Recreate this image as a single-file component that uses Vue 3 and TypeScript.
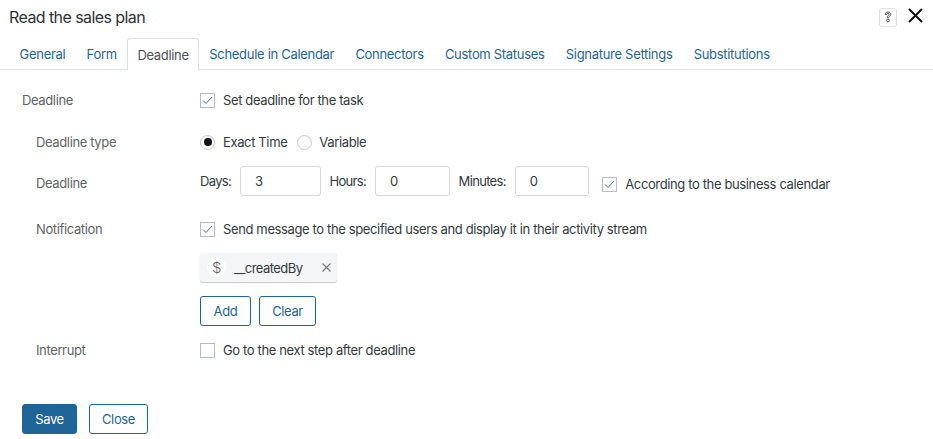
<template>
  <div class="dialog">
    <header class="head">
      <h1 class="title">Read the sales plan</h1>
      <div class="head_tools">
        <span class="help">
          <svg width="8" height="12" viewBox="0 0 8 12" fill="none" stroke="#555" stroke-width="1">
            <path d="M1.2 3.4C1.2 2 2.4 1 4 1s2.8 1 2.8 2.4c0 1-.7 1.6-1.4 2-.4.3-.6.5-.6 1H3.2c0-1 .5-1.5 1.1-1.9.5-.3.9-.6.9-1.1 0-.6-.5-1-1.2-1s-1.2.4-1.2 1z" />
            <circle cx="4" cy="9.4" r="1.4" />
          </svg>
        </span>
        <svg class="close_x" width="15" height="15" viewBox="0 0 15 15" stroke="#111" stroke-width="2" fill="none">
          <path d="M1 1l13 13M14 1L1 14" />
        </svg>
      </div>
    </header>

    <nav class="tabs">
      <a v-for="tab in tabs" :key="tab" class="tab" :class="{ active: tab === activeTab }">{{ tab }}</a>
    </nav>

    <main class="body">
      <div class="row row_main">
        <div class="label top">Deadline</div>
        <label class="check">
          <span class="box on">
            <svg width="11" height="9" viewBox="0 0 11 9" fill="none" stroke="#2f7ab8" stroke-width="1"><path d="M1 4.5l3 3 6-6.5" /></svg>
          </span>
          Set deadline for the task
        </label>
      </div>

      <div class="row row_type">
        <div class="label">Deadline type</div>
        <div class="radios">
          <label class="radio"><span class="dot on"></span>Exact Time</label>
          <label class="radio"><span class="dot"></span>Variable</label>
        </div>
      </div>

      <div class="row row_time">
        <div class="label time_title">Deadline</div>
        <div class="time">
          <template v-for="f in timeFields" :key="f.name">
            <span class="time_label">{{ f.name }}:</span>
            <input class="num" :style="{ width: f.width + 'px' }" :value="f.value" readonly />
          </template>
          <label class="check calendar">
            <span class="box on">
              <svg width="11" height="9" viewBox="0 0 11 9" fill="none" stroke="#2f7ab8" stroke-width="1"><path d="M1 4.5l3 3 6-6.5" /></svg>
            </span>
            According to the business calendar
          </label>
        </div>
      </div>

      <div class="row row_notify">
        <div class="label">Notification</div>
        <div class="notify">
          <label class="check">
            <span class="box on">
              <svg width="11" height="9" viewBox="0 0 11 9" fill="none" stroke="#2f7ab8" stroke-width="1"><path d="M1 4.5l3 3 6-6.5" /></svg>
            </span>
            Send message to the specified users and display it in their activity stream
          </label>
          <div class="chip">
            <span class="chip_icon">$</span>
            <span class="chip_text">__createdBy</span>
            <svg width="9" height="9" viewBox="0 0 9 9" stroke="#777" stroke-width="1.1" fill="none"><path d="M.5.5l8 8M8.5.5l-8 8" /></svg>
          </div>
          <div class="btns">
            <button class="btn add">Add</button>
            <button class="btn clear">Clear</button>
          </div>
        </div>
      </div>

      <div class="row row_interrupt">
        <div class="label">Interrupt</div>
        <label class="check">
          <span class="box"></span>
          Go to the next step after deadline
        </label>
      </div>
    </main>

    <footer class="foot">
      <button class="btn primary">Save</button>
      <button class="btn close">Close</button>
    </footer>
  </div>
</template>

<script setup lang="ts">
const activeTab = 'Deadline'
const tabs: string[] = [
  'General',
  'Form',
  'Deadline',
  'Schedule in Calendar',
  'Connectors',
  'Custom Statuses',
  'Signature Settings',
  'Substitutions'
]

type TimeField = { name: string; value: string; width: number }
const timeFields: TimeField[] = [
  { name: 'Days', value: '3', width: 81 },
  { name: 'Hours', value: '0', width: 75 },
  { name: 'Minutes', value: '0', width: 74 }
]
</script>

<style>
html,
body {
  background: #fff;
}
</style>

<style scoped>
.dialog {
  width: 933px;
  height: 439px;
  overflow: hidden;
  font-family: Inter, "Liberation Sans", sans-serif;
  font-size: 13px;
  letter-spacing: -0.37px;
  color: #333a42;
  background: #fff;
}
.head {
  display: flex;
  align-items: center;
  justify-content: space-between;
  height: 38px;
  padding: 0 9px 4px;
  box-sizing: border-box;
}
.title {
  margin: 0;
  font-size: 16px;
  font-weight: 400;
  letter-spacing: -0.58px;
  color: #2e3338;
}
.head_tools {
  display: flex;
  align-items: center;
  gap: 11px;
  padding-right: 1px;
}
.help {
  display: flex;
  align-items: center;
  justify-content: center;
  width: 18px;
  height: 19px;
  box-sizing: border-box;
  border: 1px solid #dcdfe3;
  border-radius: 3px;
}
.close_x {
  display: block;
  margin-bottom: 3px;
}
.tabs {
  display: flex;
  height: 32px;
  padding-left: 9px;
  box-sizing: border-box;
  border-bottom: 1px solid #dcdfe6;
}
.tab {
  height: 31px;
  line-height: 31px;
  padding: 1px 10.6px 0;
  box-sizing: border-box;
  letter-spacing: -0.3px;
  color: #1f6496;
  white-space: nowrap;
}
.tab.active {
  height: 32px;
  padding: 1px 9px 0;
  letter-spacing: -0.33px;
  color: #4c5259;
  background: #fff;
  border: 1px solid #dcdfe6;
  border-bottom: 0;
  border-radius: 3px 3px 0 0;
}
.body {
  padding-left: 22px;
}
.row {
  display: flex;
}
.row_main {
  height: 20px;
  margin-top: 20px;
  align-items: center;
}
.row_type {
  height: 20px;
  margin-top: 22px;
  align-items: center;
}
.row_time {
  height: 30px;
  margin-top: 14px;
  align-items: center;
}
.row_notify {
  margin-top: 25px;
}
.row_interrupt {
  height: 20px;
  margin-top: 14px;
  align-items: center;
}
.label {
  flex: none;
  width: 164px;
  padding-left: 14px;
  color: #5f6468;
}
.label.top {
  width: 178px;
  padding-left: 0;
}
.time_title {
  padding-top: 3px;
}
.check {
  display: flex;
  align-items: center;
  gap: 8px;
  white-space: nowrap;
}
.box {
  flex: none;
  display: flex;
  align-items: center;
  justify-content: center;
  width: 15px;
  height: 15px;
  box-sizing: border-box;
  border: 1px solid #b9bcc0;
  background: #fff;
}
.radios {
  display: flex;
  gap: 10px;
}
.radio {
  display: flex;
  align-items: center;
  gap: 7px;
}
.radio:first-child {
  gap: 8px;
}
.dot {
  position: relative;
  width: 15px;
  height: 15px;
  box-sizing: border-box;
  border: 1px solid #c4c7cb;
  border-radius: 50%;
}
.dot.on::after {
  content: "";
  position: absolute;
  left: 2.5px;
  top: 2.5px;
  width: 8px;
  height: 8px;
  border-radius: 50%;
  background: #111;
}
.time {
  display: flex;
  align-items: center;
}
.time_label {
  margin-right: 9px;
  letter-spacing: -0.68px;
}
.num {
  height: 30px;
  box-sizing: border-box;
  margin-right: 8.5px;
  padding: 0 14px;
  font: inherit;
  letter-spacing: inherit;
  color: #333a42;
  border: 1px solid #d5d8dc;
  border-radius: 3px;
  outline: none;
}
.calendar {
  margin-left: 5px;
  padding-top: 6px;
}
.notify {
  display: flex;
  flex-direction: column;
  align-items: flex-start;
}
.chip {
  display: flex;
  align-items: center;
  width: 137px;
  height: 29px;
  margin-top: 16px;
  padding: 0 6px 0 7px;
  box-sizing: border-box;
  background: #f4f5f6;
  border-radius: 3px;
  box-shadow: 0 1px 1px rgba(0, 0, 0, 0.22);
}
.chip_icon {
  flex: none;
  width: 19px;
  height: 19px;
  line-height: 19px;
  margin-right: 8px;
  text-align: center;
  font-size: 15px;
  font-weight: 300;
  color: #666;
  background: #fff;
  border-radius: 50%;
}
.chip_text {
  flex: 1;
  letter-spacing: -0.55px;
}
.btns {
  display: flex;
  gap: 8px;
  margin-top: 14px;
}
.btn {
  height: 30px;
  padding: 0;
  box-sizing: border-box;
  font: inherit;
  letter-spacing: inherit;
  color: #1f6496;
  background: #fff;
  border: 1px solid #1f6496;
  border-radius: 3px;
}
.add {
  width: 51px;
}
.clear {
  width: 57px;
}
.foot {
  display: flex;
  gap: 12px;
  margin-top: 44px;
  padding-left: 22px;
}
.primary {
  width: 55px;
  color: #fff;
  background: #1f6496;
}
.close {
  width: 59px;
}
</style>
